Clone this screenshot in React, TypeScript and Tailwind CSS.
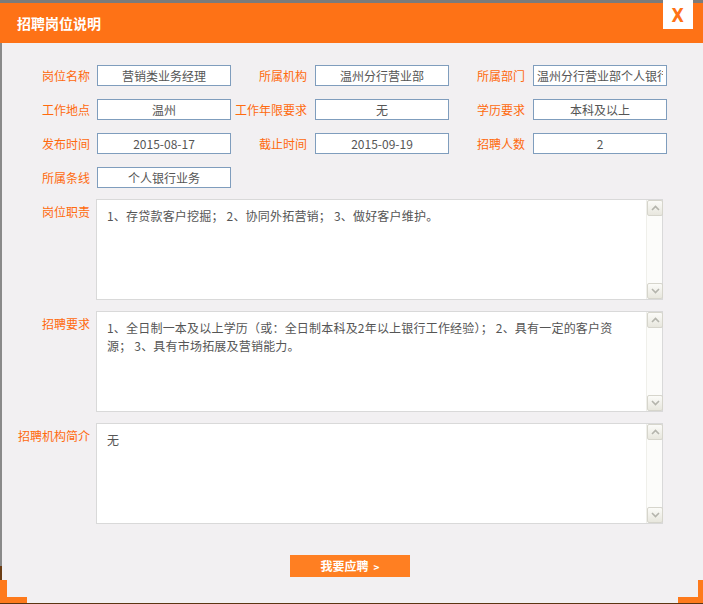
import React from "react";

const FONT = '"Noto Sans CJK SC", "Liberation Sans", sans-serif';

type Field = { label: string; value: string };

const rows: Field[][] = [
  [
    { label: "岗位名称", value: "营销类业务经理" },
    { label: "所属机构", value: "温州分行营业部" },
    { label: "所属部门", value: "温州分行营业部个人银行部" },
  ],
  [
    { label: "工作地点", value: "温州" },
    { label: "工作年限要求", value: "无" },
    { label: "学历要求", value: "本科及以上" },
  ],
  [
    { label: "发布时间", value: "2015-08-17" },
    { label: "截止时间", value: "2015-09-19" },
    { label: "招聘人数", value: "2" },
  ],
  [{ label: "所属条线", value: "个人银行业务" }],
];

const areas: { label: string; lines: string[] }[] = [
  {
    label: "岗位职责",
    lines: ["1、存贷款客户挖掘； 2、协同外拓营销； 3、做好客户维护。"],
  },
  {
    label: "招聘要求",
    lines: [
      "1、全日制一本及以上学历（或：全日制本科及2年以上银行工作经验）； 2、具有一定的客户资",
      "源； 3、具有市场拓展及营销能力。",
    ],
  },
  { label: "招聘机构简介", lines: ["无"] },
];

function ScrollButton({ up }: { up?: boolean }) {
  return (
    <div className="flex h-[16px] w-[16px] items-center justify-center rounded-[2px] border border-[#d6d5cc] bg-gradient-to-b from-[#fbfbf8] to-[#e8e7de]">
      <svg width="9" height="6" viewBox="0 0 9 6">
        <polyline
          points={up ? "1,5 4.5,1.5 8,5" : "1,1 4.5,4.5 8,1"}
          fill="none"
          stroke="#b4b4ac"
          strokeWidth="1.6"
        />
      </svg>
    </div>
  );
}

function TextBox({ lines }: { lines: string[] }) {
  return (
    <div className="flex h-[101px] w-[567px] border border-[#d9d9d9] bg-white">
      <div className="flex-1 pl-[10px] pt-[7px] text-[12px] leading-[18px] tracking-[0.2px] text-[#555]">
        {lines.map((l, i) => (
          <div key={i} className="whitespace-pre">
            {l}
          </div>
        ))}
      </div>
      <div className="flex w-[16px] flex-col justify-between border-l border-[#efefea] bg-[#fcfcfa]">
        <ScrollButton up />
        <ScrollButton />
      </div>
    </div>
  );
}

export default function App() {
  return (
    <div
      className="relative h-[604px] w-[703px] overflow-hidden bg-[#f2f0f2]"
      style={{ fontFamily: FONT }}
    >
      <div className="h-[3px] bg-[#7b7b7b]" />
      <div className="flex h-[40px] items-center bg-[#fe7216] pl-[17px]">
        <span className="text-[14px] font-bold text-white">招聘岗位说明</span>
      </div>
      <div className="absolute left-[663px] top-0 flex h-[29px] w-[30px] items-center justify-center bg-white pt-[1px]">
        <span
          className="scale-x-[0.8] text-[20px] font-bold leading-none text-[#fe7216]"
          style={{ fontFamily: '"DejaVu Sans", sans-serif' }}
        >
          X
        </span>
      </div>

      <div className="flex flex-col gap-[13px] pt-[22px]">
        {rows.map((row, ri) => (
          <div key={ri} className="flex h-[21px] items-center">
            {row.map((f, fi) => (
              <React.Fragment key={f.label}>
                <div
                  className={`${fi === 0 ? "w-[90px]" : "w-[76px]"} text-right text-[12px] text-[#ff6a0e]`}
                >
                  {f.label}
                </div>
                <input
                  readOnly
                  value={f.value}
                  className={`${fi === 0 ? "ml-[7px]" : "ml-[8px]"} h-[21px] w-[134px] border border-[#7f9dbd] bg-white px-[3px] text-center text-[12px] text-[#555] outline-none`}
                />
              </React.Fragment>
            ))}
          </div>
        ))}
      </div>

      <div className="mt-[11px] flex flex-col gap-[11px]">
        {areas.map((a) => (
          <div key={a.label} className="flex">
            <div className="w-[90px] pt-[5px] text-right text-[12px] leading-[16px] text-[#ff6a0e]">
              {a.label}
            </div>
            <div className="ml-[6px]">
              <TextBox lines={a.lines} />
            </div>
          </div>
        ))}
      </div>

      <div className="mt-[31px] pl-[290px]">
        <button className="flex h-[22px] w-[120px] items-center justify-center bg-[#ff7f22] text-white">
          <span className="text-[12px] font-bold">我要应聘</span>
          <span className="ml-[5px] text-[10px] font-bold">&gt;</span>
        </button>
      </div>

      {/* frame edge and corner marks */}
      <div className="absolute left-0 top-[43px] h-[523px] w-[2px] bg-[#8a8a8a]" />
      <div className="absolute bottom-0 left-0 h-[38px] w-[2px] bg-[#6b3d14]" />
      <div className="absolute bottom-[1px] left-0 h-[23px] w-[7px] bg-[#fe7a1c]" />
      <div className="absolute bottom-[1px] left-0 h-[6px] w-[27px] bg-[#fe7a1c]" />
      <div className="absolute bottom-[1px] right-0 h-[23px] w-[5px] bg-[#fe7a1c]" />
      <div className="absolute bottom-[1px] right-0 h-[6px] w-[25px] bg-[#fe7a1c]" />
      <div className="absolute bottom-0 left-0 h-[1px] w-full bg-[#5a3512]" />
    </div>
  );
}
